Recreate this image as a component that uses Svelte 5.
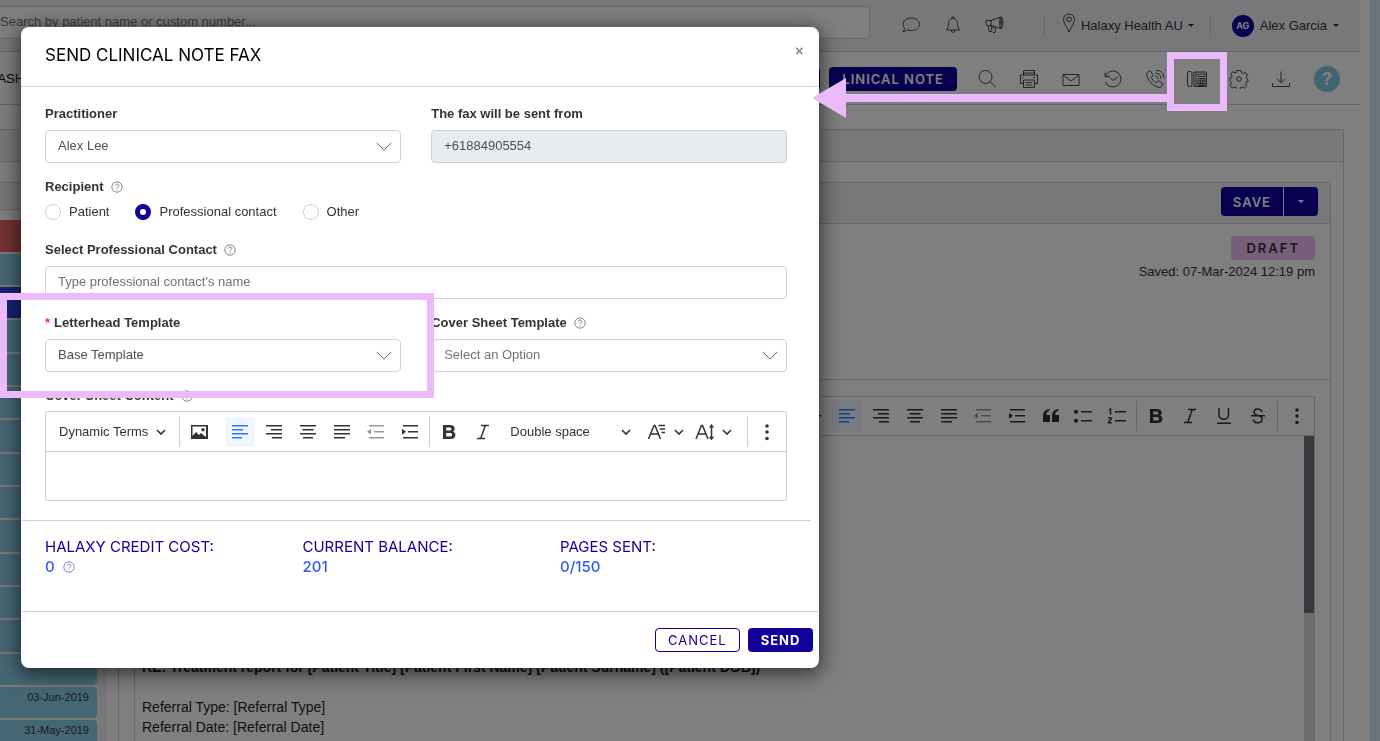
<script>
  const timeline = ['', '', '', '', '', '', '', '', '', '', '', '', '', '', '03-Jun-2019', '31-May-2019'];

  const tools = [
    { name: 'Search', icon: 'search' },
    { name: 'Print', icon: 'printer' },
    { name: 'Email', icon: 'mail' },
    { name: 'History', icon: 'history' },
    { name: 'Call', icon: 'phone' },
    { name: 'Fax', icon: 'fax' },
    { name: 'Settings', icon: 'gear' },
    { name: 'Download', icon: 'download' }
  ];

  const alignTools = ['left', 'right', 'center', 'justify', 'outdent', 'indent'];

  const costs = [
    { label: 'HALAXY CREDIT COST:', value: '0', help: true },
    { label: 'CURRENT BALANCE:', value: '201', help: false },
    { label: 'PAGES SENT:', value: '0/150', help: false }
  ];

  let recipient = $state('professional');
</script>

{#snippet edIcon(name)}
  <svg class="ed" viewBox="0 0 20 20" aria-hidden="true">
    {#if name === 'left'}
      <path d="M2 3.75h16M2 7.75h11M2 11.75h16M2 15.75h10" />
    {:else if name === 'right'}
      <path d="M2 3.75h16M7 7.75h11M2 11.75h16M8 15.75h10" />
    {:else if name === 'center'}
      <path d="M2 3.75h16M4.5 7.75h11M2 11.75h16M5 15.75h10" />
    {:else if name === 'justify'}
      <path d="M2 3.75h16M2 7.75h16M2 11.75h16M2 15.75h11" />
    {:else if name === 'outdent'}
      <path d="M3 3.75h15M8 9.75h10M3 15.75h15" /><path class="solid" d="M5 6.8v6L1 9.8z" />
    {:else if name === 'indent'}
      <path d="M3 3.75h15M8 9.75h10M3 15.75h15" /><path class="solid" d="M2 6.8v6l4-3z" />
    {:else if name === 'image'}
      <path class="solid" fill-rule="evenodd" d="M2 3h17v14H2zM3.5 4.500v9.500l3.500-4 3 3 2-2 5 4V4.500zM14 6a1.700 1.700 0 1 1 0 3.400A1.700 1.700 0 0 1 14 6z" />
    {:else if name === 'bold'}
      <path class="solid" fill-rule="evenodd" d="M4 3h7c3 0 4.700 1.500 4.700 3.700 0 1.400-.7 2.400-1.900 2.900 1.600.5 2.600 1.700 2.600 3.400C16.400 15.600 14.500 17 11.400 17H4zM7.200 5.500v3h3.200c1.300 0 2-.5 2-1.500s-.7-1.500-2-1.500zM7.200 11v3.500H11c1.400 0 2.100-.6 2.100-1.800 0-1.100-.7-1.700-2.100-1.700z" />
    {:else if name === 'italic'}
      <path d="M8 3.500h8M4 16.500h8M12.300 3.500l-4.600 13" />
    {:else if name === 'underline'}
      <path d="M5 2v6.500a4.500 4.500 0 0 0 9.500 0V2M3 17.250h14" />
    {:else if name === 'strike'}
      <path d="M14 6c-.5-2-2-3-4.200-3C7.500 3 6 4.200 6 6.200 6 8 7.500 8.800 10 9.500c2.700.8 4 1.600 4 3.700 0 2.200-1.700 3.600-4.200 3.600-2.400 0-4-1.200-4.400-3.300M3 9.750h14" />
    {:else if name === 'quote'}
      <path class="solid" d="M2 16V10c0-4 2-6.500 6.500-7v1.500C6.300 5.300 5.300 6.800 5.300 9H9v7zM11 16V10c0-4 2-6.500 6.500-7v1.500c-2.200.8-3.200 2.300-3.200 4.500H18v7z" />
    {:else if name === 'bullets'}
      <path d="M8 5.750h11M8 14.750h11" /><circle class="solid" cx="3" cy="5.750" r="2" /><circle class="solid" cx="3" cy="14.750" r="2" />
    {:else if name === 'numbers'}
      <path d="M8 5.750h11M8 14.750h11M2 4l1.500-1v5.500M1.500 12.500c.5-1.300 3-1 2.700.5-.2 1-2.700 2.500-2.700 3.700h3.300" />
    {:else if name === 'rule'}
      <path d="M3 9.750h15" />
    {:else if name === 'size'}
      <path d="M1.500 17 7 3.500h1L13.500 17M3.500 12h8M11.500 3.500H18M13 7h5M14.500 10.500H18" />
    {:else if name === 'height'}
      <path d="M1 17 6.500 3.500h1L13 17M3 12h8M16.500 4v12.500" /><path class="solid" d="M13.800 5.500h5.400L16.500 2zM13.800 14.800h5.400l-2.700 3.500z" />
    {:else if name === 'dots'}
      <circle class="solid" cx="10" cy="4" r="1.800" /><circle class="solid" cx="10" cy="10" r="1.800" /><circle class="solid" cx="10" cy="16.500" r="1.800" />
    {/if}
  </svg>
{/snippet}

{#snippet chev()}
  <svg class="chev" viewBox="0 0 10 10" aria-hidden="true"><path d="M1 3l4 4 4-4" /></svg>
{/snippet}

{#snippet help()}
  <svg class="help" viewBox="0 0 12 12" aria-hidden="true">
    <circle cx="6" cy="6" r="5.200" /><path d="M4.200 4.700c.1-2.200 3.600-2.200 3.600 0C7.800 6 6 5.900 6 7.400M6 8.500v1" />
  </svg>
{/snippet}

{#snippet wide()}
  <svg class="wide" viewBox="0 0 18 10" aria-hidden="true"><path d="M1 1l8 8 8-8" /></svg>
{/snippet}

{#snippet lineIcon(name)}
  <svg class="line" viewBox="0 0 20 20" aria-hidden="true">
    {#if name === 'chat'}
      <path d="M10.500 3c4.700 0 8 2.700 8 6.300s-3.300 6.200-8 6.200c-1.500 0-2.800-.2-4-.8-1.300 1.200-2.700 1.800-4.500 1.800 1-1 1.500-2 1.600-3.200C2.600 12.300 2 11 2 9.300 2 5.700 5.800 3 10.500 3z" />
    {:else if name === 'bell'}
      <path d="M10 3.500c-3.300 0-4.500 2.500-4.500 5 0 3.500-1 5-2 6.500h13c-1-1.500-2-3-2-6.500 0-2.500-1.200-5-4.500-5zM9 3.500v-1c0-.8 2-.8 2 0v1M8 15c0 3 4 3 4 0" />
    {:else if name === 'horn'}
      <path d="M1 5.500h5L16 2v11.500L6 10.500H2.500L1 9zM6 5.500v5M3 10.500l1 6h3l-1-6M7 12l4 1.500-1 4H8M16 2c2.500 0 2.500 11.500 0 11.500-1.800 0-1.800-11.500 0-11.500M16 6v3" />
    {:else if name === 'pin'}
      <path d="M10 1C6.500 1 4.500 3.500 4.500 6.500 4.500 10 8 14 10 19c2-5 5.500-9 5.500-12.500C15.500 3.500 13.500 1 10 1z" /><circle cx="10" cy="6.500" r="2.300" />
    {:else if name === 'search'}
      <circle cx="8.500" cy="8" r="6.500" /><path d="M13.200 12.700l5.500 5.500" />
    {:else if name === 'printer'}
      <path d="M4.500 6V1.500h11V6M4.500 14.500h-3V6h17v8.500h-3M4.500 11h11v7.500h-11zM6.500 13.500h7M6.500 16h7M3.500 8.500h1M14 8.500h2M4.500 4h11" />
    {:else if name === 'mail'}
      <path d="M2 5.500h16v11H2zM2 6l8 6 8-6" />
    {:else if name === 'history'}
      <path d="M2.500 8C3.500 4 6.500 2 10 2a8 8 0 1 1-7.500 11M2 3.500 2.500 8 7 7M6.500 8.500l3.800 3 4.500-3.500" />
    {:else if name === 'phone'}
      <path d="M5 1.500 1.700 4C1.500 11 9 18.500 15.500 18.500l2.700-3.300-4.300-3.500-2.600 2C9 12.700 7 10.500 6.300 8.500l2-2.300zM10 7c2 .2 3 1.200 3.200 3.200M10.500 4c3.500.2 5.300 2.200 5.500 5.500M11 1.300c5 .2 7.700 3 8 8" />
    {:else if name === 'fax'}
      <rect x="0.500" y="2.500" width="4.500" height="15" rx="1.500" /><path d="M7 3h12.500v14.500H7zM9 3v14M11 5h7v2.500h-7zM11 9.500h7M11 12h7M11 14.500h7M11 9.500v7M13.300 9.500v7M15.700 9.500v7M18 9.500v7M11 16.500h7" />
    {:else if name === 'gear'}
      <path d="M8 1.500h4l.7 2.300 1.600.7 2.200-1 2 2.600-1.300 2 .4 1.700 1.400.6v2l-1.600.6-.7 1.700 1 2-2.400 2.300-2.100-1-1.700.7-.7 1.800H8l-.7-1.800-1.700-.7-2.100 1-2.300-2.600 1-2-.6-1.600L1 11.500V9l1.500-.5.5-1.700-1.300-2L4 2.700l2 1 1.400-.4z" /><circle cx="10" cy="10" r="2.300" />
    {:else if name === 'download'}
      <path d="M10 2.500v11M6 9.700l4 4 4-4M1.500 14v3.500h17V14" />
    {/if}
  </svg>
{/snippet}

<div class="page" aria-hidden="true">
  <div class="app">
    <header class="top">
      <input class="finder" type="search" aria-label="Search patients" placeholder="Search by patient name or custom number..." />
      <div class="alerts">
        <button type="button" aria-label="Messages">{@render lineIcon('chat')}</button>
        <button type="button" aria-label="Notifications">{@render lineIcon('bell')}</button>
        <button type="button" aria-label="Announcements">{@render lineIcon('horn')}</button>
      </div>
      <button type="button" class="menu clinic">{@render lineIcon('pin')}Halaxy Health AU<i class="caret"></i></button>
      <button type="button" class="menu user"><span class="avatar">AG</span>Alex Garcia<i class="caret"></i></button>
    </header>

    <nav class="bar">
      <a href="#dash" class="dash">DASHBOARD</a>
      <div class="actions">
        <button type="button" class="ghost" aria-label="Appointment"></button>
        <button type="button" class="solidbtn">LINICAL NOTE</button>
      </div>
      <div class="tools">
        {#each tools as tool}
          <button type="button" aria-label={tool.name}>{@render lineIcon(tool.icon)}</button>
        {/each}
      </div>
      <button type="button" class="ask" aria-label="Help">?</button>
    </nav>

    <main class="work">
      <aside class="side">
        <div class="sidehead"></div>
        <div class="sidesub"></div>
        <div class="events">
          {#each timeline as date, i}
            <div class="event" class:red={i === 0} class:navy={i === 2}>{date}</div>
          {/each}
        </div>
      </aside>
      <section class="outer">
        <div class="outerhead"></div>
        <article class="note">
          <div class="notehead">
            <div class="save">
              <button type="button">SAVE</button>
              <button type="button" aria-label="More save options"><i class="caret"></i></button>
            </div>
          </div>
          <div class="status">
            <span class="draft">DRAFT</span>
            <span>Saved: 07-Mar-2024 12:19 pm</span>
          </div>
          <div class="editor">
            <div class="ribbon">
              <div class="group">
                <button type="button" aria-label="Horizontal line">{@render edIcon('rule')}</button>
                {#each alignTools as t}
                  <button type="button" aria-label={t} class:on={t === 'left'} class:off={t === 'outdent'}>{@render edIcon(t)}</button>
                {/each}
                <button type="button" aria-label="Quote">{@render edIcon('quote')}</button>
              </div>
              <div class="group">
                <button type="button" aria-label="Bulleted list">{@render edIcon('bullets')}</button>
                <button type="button" aria-label="Numbered list">{@render edIcon('numbers')}</button>
              </div>
              <i class="sep"></i>
              <div class="group">
                {#each ['bold', 'italic', 'underline', 'strike'] as t}
                  <button type="button" aria-label={t}>{@render edIcon(t)}</button>
                {/each}
              </div>
              <i class="sep"></i>
              <button type="button" aria-label="More">{@render edIcon('dots')}</button>
            </div>
            <div class="sheet">
              <div class="letter">
                <p><strong>RE: Treatment report for [Patient Title] [Patient First Name] [Patient Surname] ([Patient DOB])</strong></p>
                <p>Referral Type: [Referral Type]<br />Referral Date: [Referral Date]</p>
              </div>
              <div class="track"><div class="thumb"></div></div>
            </div>
          </div>
        </article>
      </section>
    </main>
  </div>
</div>

<div class="shade"></div>

<form class="modal" aria-labelledby="fax-title" onsubmit={(e) => e.preventDefault()}>
  <header class="mhead">
    <h1 id="fax-title">SEND CLINICAL NOTE FAX</h1>
    <button type="button" class="close" aria-label="Close">×</button>
  </header>

  <div class="mbody">
    <div class="pair">
      <div class="field">
        <label for="practitioner">Practitioner</label>
        <div class="pick">
          <select id="practitioner"><option>Alex Lee</option></select>
          {@render wide()}
        </div>
      </div>
      <div class="field">
        <label for="from">The fax will be sent from</label>
        <input id="from" type="text" value="+61884905554" disabled />
      </div>
    </div>

    <fieldset>
      <legend>Recipient {@render help()}</legend>
      <div class="radios">
        <label><input type="radio" name="recipient" value="patient" bind:group={recipient} />Patient</label>
        <label><input type="radio" name="recipient" value="professional" bind:group={recipient} />Professional contact</label>
        <label><input type="radio" name="recipient" value="other" bind:group={recipient} />Other</label>
      </div>
    </fieldset>

    <div class="field">
      <label for="contact">Select Professional Contact {@render help()}</label>
      <input id="contact" type="text" placeholder="Type professional contact's name" />
    </div>

    <div class="pair">
      <div class="field">
        <label for="letterhead"><span class="req">*</span>Letterhead Template</label>
        <div class="pick">
          <select id="letterhead"><option>Base Template</option></select>
          {@render wide()}
        </div>
      </div>
      <div class="field">
        <label for="cover">Cover Sheet Template {@render help()}</label>
        <div class="pick">
          <select id="cover" class="empty"><option>Select an Option</option></select>
          {@render wide()}
        </div>
      </div>
    </div>

    <div class="field tight">
      <label for="content">Cover Sheet Content {@render help()}</label>
      <div class="cover">
        <div class="ribbon">
          <button type="button" class="text">Dynamic Terms {@render chev()}</button>
          <i class="sep"></i>
          <button type="button" class="picture" aria-label="Image">{@render edIcon('image')}</button>
          <div class="group">
            {#each alignTools as t}
              <button type="button" aria-label={t} class:on={t === 'left'} class:off={t === 'outdent'}>{@render edIcon(t)}</button>
            {/each}
          </div>
          <i class="sep"></i>
          <div class="group">
            <button type="button" aria-label="Bold">{@render edIcon('bold')}</button>
            <button type="button" aria-label="Italic">{@render edIcon('italic')}</button>
          </div>
          <button type="button" class="text spacing">Double space {@render chev()}</button>
          <button type="button" class="split" aria-label="Font size">{@render edIcon('size')}{@render chev()}</button>
          <button type="button" class="split" aria-label="Line height">{@render edIcon('height')}{@render chev()}</button>
          <i class="sep last"></i>
          <button type="button" aria-label="More">{@render edIcon('dots')}</button>
        </div>
        <textarea id="content"></textarea>
      </div>
    </div>
  </div>

  <div class="costs">
    {#each costs as cost}
      <div class="cost">
        <span>{cost.label}</span>
        <b>{cost.value}{#if cost.help}{@render help()}{/if}</b>
      </div>
    {/each}
  </div>

  <footer class="mfoot">
    <button type="button" class="cancel">CANCEL</button>
    <button type="submit" class="send">SEND</button>
  </footer>
</form>

<div class="frame template"></div>
<div class="frame fax"></div>
<svg class="arrow" viewBox="0 0 356 40" aria-hidden="true"><path d="M0 20 34 0v16h322v8H34v16z" /></svg>

<style>
  :global(body) {
    margin: 0;
    overflow: hidden;
    font: 13px/20px "Liberation Sans", Arial, sans-serif;
    color: #333;
    background: #d6e8fa;
  }
  button, input, select, textarea { font: inherit; color: inherit; box-sizing: border-box; }
  button { border: 0; background: none; padding: 0; cursor: pointer; }
  svg { display: block; flex: none; fill: none; stroke: currentColor; }
  .line { width: 20px; height: 20px; stroke-width: 0.9; }
  .ed { width: 20px; height: 20px; stroke-width: 1.5; }
  .solid { fill: currentColor; stroke: none; }
  .chev { width: 10px; height: 10px; stroke-width: 1.6; }
  .help { width: 12px; height: 12px; stroke-width: 0.7; color: #555; }
  .caret { width: 0; height: 0; border: 3px solid transparent; border-top-color: currentColor; border-bottom: 0; }
  h1, .solidbtn, .save button, .draft, .costs, .mfoot button, .avatar, .ask { font-family: Inter, sans-serif; }

  .page { height: 100vh; overflow: hidden; }
  .app { margin-right: 10px; padding-right: 10px; background: #fff; height: 100%; display: flex; flex-direction: column; }

  .top { display: flex; flex: none; align-items: center; height: 51px; background: #f1f1f6; border-bottom: 1px solid #cfcfda; padding-right: 21px; }
  .finder { flex: 1; height: 33px; margin-bottom: 6px; border: 1px solid #cfd0dc; border-left: 0; border-radius: 0 4px 4px 0; padding: 0 0 2px; background: #fff; outline: 0; }
  .finder::placeholder { color: #6c757d; opacity: 1; }
  .alerts { display: flex; gap: 22px; padding: 0 39px 2px 31px; }
  .menu { display: flex; align-items: center; height: 20px; gap: 6px; border-left: 1px solid #cfcfda; }
  .clinic { padding: 0 16px 0 14px; gap: 2px; }
  .clinic .line { padding-bottom: 5px; }
  .clinic .caret { margin-left: 3px; }
  .user { padding-left: 21px; }
  .avatar { width: 22px; border-radius: 50%; background: #10009c; color: #fff; font-size: 9px; line-height: 22px; font-weight: 700; }

  .bar { display: flex; flex: none; align-items: center; height: 50px; padding: 2px 20px 0 0; border-bottom: 1px solid #cfcfda; }
  .dash { color: #111; text-decoration: none; margin-left: -12px; }
  .actions { display: flex; gap: 9px; margin-left: auto; }
  .solidbtn, .ghost { height: 24px; border-radius: 4px; padding: 0 13px; font-weight: 600; letter-spacing: 1px; }
  .solidbtn { background: #10009c; color: #fff; }
  .ghost { width: 80px; border: 1px solid #10009c; }
  .tools { display: flex; gap: 22px; padding: 0 23px 0 20px; }
  .ask { width: 26px; height: 26px; border-radius: 50%; background: #83c9e4; color: #fff; font-size: 18px; font-weight: 700; }

  .work { flex: 1; display: flex; padding-top: 24px; min-height: 0; overflow: hidden; }
  .side { width: 107px; flex: none; background: #fff; border-top: 1px solid #cfcfda; }
  .sidehead { height: 31px; background: #f1f1f4; border-bottom: 1px solid #cfcfda; }
  .sidesub { height: 26px; background: #f1f1f4; border: solid #cfcfda; border-width: 1px 0; margin: 20px 0 10px; }
  .events { display: grid; grid-template-rows: repeat(6, 32px 31px 31px); gap: 2px; border-right: 10px solid #f1f1f4; background: #fcf2ee; }
  .event { background: #8bcfe9; border-radius: 0 4px 4px 0; text-align: right; padding-right: 8px; font-size: 11px; line-height: 20px; color: #333; }
  .red { background: #e66262; }
  .navy { background: #2842f0; }
  .outer { flex: 1; margin: 0 16px 0 11px; border: 1px solid #cfcfda; border-bottom: 0; border-radius: 4px 4px 0 0; display: flex; flex-direction: column; }
  .outerhead { flex: none; height: 31px; background: #f3f3f5; border-bottom: 1px solid #cfcfda; }
  .note { flex: 1; margin: 20px 12px 0 15px; border: 1px solid #cfcfda; border-bottom: 0; border-radius: 4px 4px 0 0; display: flex; flex-direction: column; }
  .notehead { display: flex; justify-content: flex-end; padding: 4px 12px 7px; background: #f1f1f6; border-bottom: 1px solid #cfcfda; }
  .save { display: flex; gap: 1px; }
  .save button { height: 29px; background: #10009c; color: #fff; font-weight: 600; letter-spacing: 1px; padding: 0 12px; border-radius: 4px 0 0 4px; }
  .save button + button { width: 34px; display: grid; place-items: center; border-radius: 0 4px 4px 0; }
  .status { display: flex; flex-direction: column; align-items: flex-end; gap: 2px; padding: 12px 15px 97px 0; border-bottom: 1px solid #cfcfda; }
  .draft { background: #eebef8; border-radius: 4px; padding: 0 15px; line-height: 24px; font-weight: 600; letter-spacing: 2px; }
  .editor { flex: 1; margin: 16px 15px 0 7px; border: 1px solid #cfcfcf; border-width: 1px 1px 0 0; display: flex; flex-direction: column; }

  .ribbon { display: flex; align-items: center; border-bottom: 1px solid #ccced1; }
  .ribbon button { display: flex; align-items: center; justify-content: center; width: 30px; height: 30px; border-radius: 2px; }
  .ribbon .on { background: #f0f7ff; color: #2977ff; }
  .ribbon .off { color: #999; }
  .group { display: flex; gap: 4px; }
  .sep { width: 1px; height: 31px; background: #ccced1; }
  .editor .ribbon { justify-content: flex-end; gap: 2px; padding: 4px 2px; }
  .editor .sep { margin: 0 2px; height: 30px; }
  .sheet { flex: 1; display: flex; }
  .letter { flex: 1; padding-top: 221px; font-size: 14px; color: #222; }
  .letter p { margin: 0 0 20px; }
  .track { width: 10px; background: #dcdce0; }
  .thumb { height: 177px; background: #6c757d; }

  .shade { position: fixed; inset: 0; background: rgba(0, 0, 0, 0.5); }

  .modal { position: absolute; left: 21px; top: 27px; width: calc(58vw - 2px); background: #fff; border-radius: 8px; box-shadow: 0 4px 20px 2px rgba(0, 0, 0, 0.6); }
  .mhead { display: flex; justify-content: space-between; align-items: center; padding: 13px 14px 16px 24px; border-bottom: 1px solid #ced4da; }
  h1 { margin: 0; font-size: 17px; line-height: 30px; font-weight: 400; color: #000; }
  .close { font-size: 14px; font-weight: 700; color: #888; width: 12px; line-height: 20px; margin-bottom: 8px; }
  .mbody { display: flex; flex-direction: column; gap: 14px; padding: 17px 32px 19px 24px; }
  .pair { display: grid; grid-template-columns: 1fr 1fr; gap: 30px; }
  .field { display: flex; flex-direction: column; gap: 6px; }
  .tight { gap: 5px; }
  .field > label, legend { display: flex; align-items: center; gap: 7px; font-weight: 600; line-height: 20px; padding: 0; }
  .req { color: #f33; margin-right: -3px; }
  .field input, select { width: 100%; height: 33px; border: 1px solid #ced4da; border-radius: 4px; padding: 0 12px 2px; background: #fff; color: #495057; outline: 0; }
  .field input:disabled { background: #e9ecef; border-color: #cfd0dc; }
  .field input::placeholder { color: #6c757d; opacity: 1; }
  select { appearance: none; opacity: 1; }
  select.empty { color: #6c757d; }
  .pick { position: relative; }
  .wide { position: absolute; right: 8px; top: 12px; width: 18px; height: 9px; pointer-events: none; color: #555; }
  fieldset { border: 0; padding: 0; margin: 0 0 4px; min-width: 0; }
  .radios { display: flex; gap: 26px; padding-top: 5px; }
  .radios label { display: flex; align-items: center; gap: 8px; }
  .radios input { appearance: none; width: 16px; height: 16px; margin: 0; border: 1px solid #ced0dc; border-radius: 50%; background: #fff; }
  .radios input:checked { border: 5px solid #10009c; }
  .cover { border: 1px solid #ccced1; border-radius: 2px; }
  .cover .ribbon { gap: 4px; padding: 4px 4px; }
  .ribbon .text { width: auto; padding: 0 9px; gap: 8px; }
  .picture { margin-right: 7px; }
  .ribbon .spacing { width: 137px; padding: 0 8px; justify-content: space-between; }
  .ribbon .split { width: 44px; gap: 7px; }
  .last { margin-left: auto; }
  textarea { display: block; width: 100%; height: 48px; border: 0; resize: none; outline: 0; background: none; }
  .costs { display: grid; grid-template-columns: 42fr 42fr 41fr; margin: 0 8px 0 1px; padding: 16px 0 34px 23px; border-top: 1px solid #ced0da; color: #10009c; font-size: 15px; }
  .cost b { display: flex; align-items: center; gap: 8px; font-weight: 500; color: #2f55ff; line-height: 20px; }
  .cost .help { color: #5a50b8; }
  .mfoot { display: flex; justify-content: flex-end; gap: 8px; margin: 0 1px; padding: 16px 5px; border-top: 1px solid #ced0da; }
  .mfoot button { height: 24px; border-radius: 4px; padding: 0 12px; letter-spacing: 1px; }
  .mfoot .cancel { border: 1px solid #10009c; color: #10009c; }
  .mfoot .send { background: #10009c; color: #fff; font-weight: 700; padding: 0 13px; }

  .frame { position: absolute; box-sizing: border-box; border: 7px solid #ebbafa; pointer-events: none; }
  .template { left: 0; top: 293px; width: 434px; height: 105px; }
  .fax { right: 153px; top: 52px; width: 60px; height: 59px; }
  .arrow { position: absolute; right: 212px; top: 78px; width: 356px; height: 40px; fill: #ebbafa; stroke: none; pointer-events: none; }
</style>
